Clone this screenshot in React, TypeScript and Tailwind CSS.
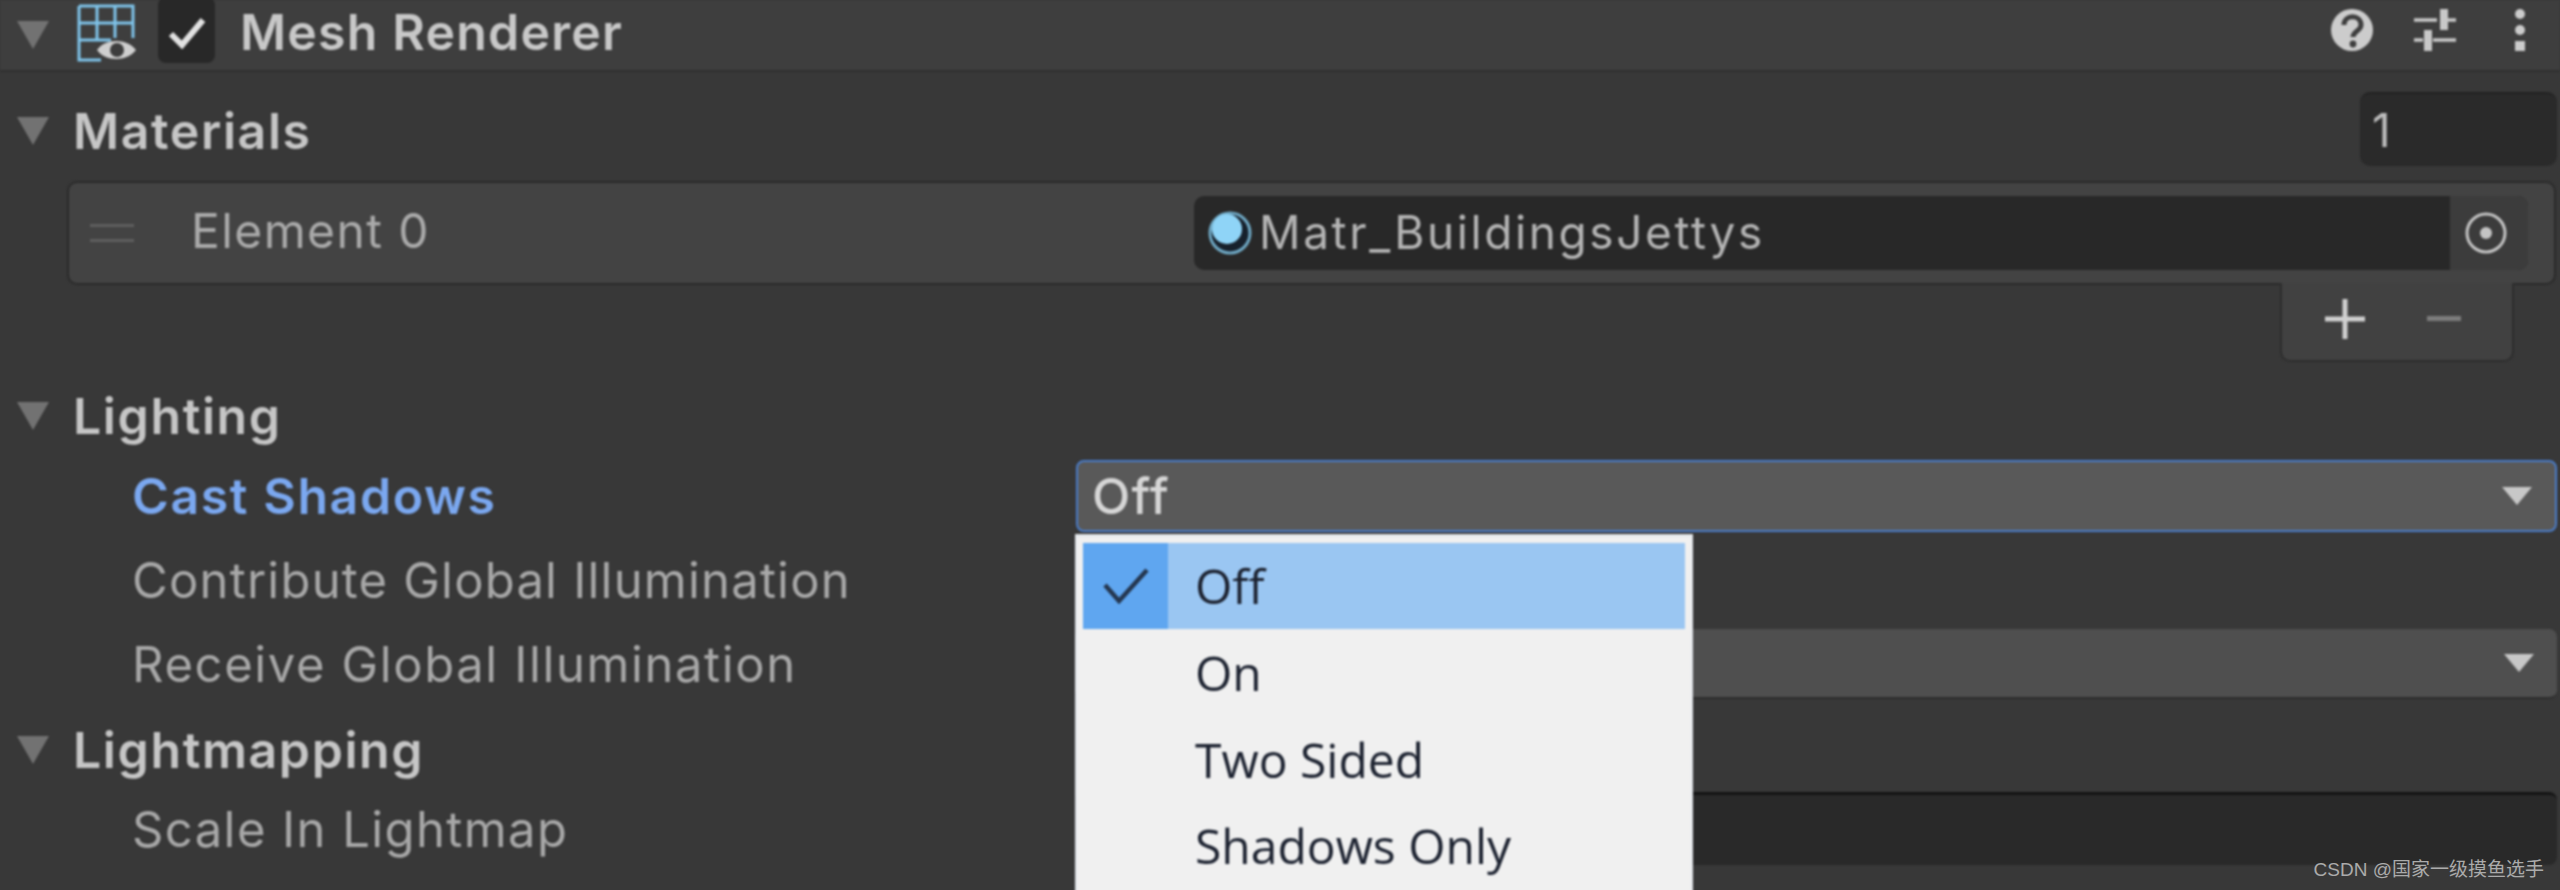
const Caret = () => (
  <svg viewBox="0 0 34 30" className="w-[34px] h-[30px] shrink-0">
    <path d="M1 1H33L17 29Z" fill="#727272" />
  </svg>
);

const MeshIcon = () => (
  <svg viewBox="0 0 60 62" className="w-[60px] h-[62px] shrink-0">
    <g fill="none" stroke="#7fc4ea" strokeWidth="3">
      <path d="M2 2H56V34M2 2V56H24M2 19H56M2 36H34M20 2V36M38 2V34" />
    </g>
    <path d="M20 46C28 34 50 34 59 46C50 58 28 58 20 46Z" fill="#cfcfcf" />
    <circle cx="40" cy="46" r="7" fill="#3d3d3d" />
  </svg>
);

const Target = () => (
  <svg viewBox="0 0 44 44" className="w-[44px] h-[44px]">
    <circle cx="22" cy="22" r="19" fill="none" stroke="#c4c4c4" strokeWidth="3" />
    <circle cx="22" cy="22" r="6" fill="#c4c4c4" />
  </svg>
);

const DownArrow = () => (
  <svg viewBox="0 0 32 20" className="w-[32px] h-[20px]">
    <path d="M1 1H31L16 19Z" fill="#c8c8c8" />
  </svg>
);

function HeaderActions() {
  return (
    <div className="ml-auto flex items-center pr-[34px] -mt-[10px]">
      <svg viewBox="0 0 44 44" className="w-[44px] h-[44px]">
        <circle cx="22" cy="22" r="21" fill="#cccccc" />
        <path d="M14 17C14 6 31 6 31 17C31 23 23 23 23 29" fill="none" stroke="#3e3e3e" strokeWidth="5" />
        <circle cx="23" cy="36" r="3.4" fill="#3e3e3e" />
      </svg>
      <svg viewBox="0 0 44 44" className="w-[44px] h-[44px] ml-[39px]">
        <path d="M1 12H24M34 12H43M1 32H10M20 32H43" stroke="#c8c8c8" strokeWidth="3.5" />
        <path d="M31 1V22M15 22V43" stroke="#c8c8c8" strokeWidth="8" />
      </svg>
      <svg viewBox="0 0 12 44" className="w-[12px] h-[44px] ml-[57px]">
        <circle cx="6" cy="6" r="5" fill="#cccccc" />
        <circle cx="6" cy="22" r="5" fill="#cccccc" />
        <rect x="1" y="33" width="10" height="10" fill="#cccccc" />
      </svg>
    </div>
  );
}

function SectionTitle({ title, className }: { title: string; className: string }) {
  return (
    <div className={`flex items-center ${className}`}>
      <div className="ml-[16px] w-[57px] flex">
        <Caret />
      </div>
      <span className="text-[50px] font-semibold text-[#c6c6c6] tracking-[1.6px]">{title}</span>
    </div>
  );
}

function PropRow({
  label,
  active,
  className,
  labelClass = "tracking-[1.2px]",
  children,
}: {
  label: string;
  active?: boolean;
  className: string;
  labelClass?: string;
  children?: React.ReactNode;
}) {
  return (
    <div className={`flex items-center ${className}`}>
      <div
        className={`ml-[132px] w-[944px] ${labelClass} ${
          active ? "text-[50px] text-[#7ba8f0] font-semibold" : "text-[49px] text-[#a8a8a8]"
        }`}
      >
        {label}
      </div>
      {children}
    </div>
  );
}

export default function App() {
  return (
    <div className="relative w-[2560px] h-[890px] overflow-hidden bg-[#383838] font-['Inter','Liberation_Sans',sans-serif] leading-none">
      <div className="blur-[1.2px]">
        {/* Component header */}
        <div className="flex items-center h-[72px] bg-[#3e3e3e] border-b-2 border-[#303030]">
          <div className="ml-[16px] w-[61px] flex">
            <Caret />
          </div>
          <MeshIcon />
          <div className="ml-[21px] w-[57px] h-[66px] -mt-[10px] rounded-[8px] bg-[#282828] flex items-center justify-center">
            <svg viewBox="0 0 38 32" className="w-[38px] h-[32px] mt-[6px]">
              <path d="M3 17L14 28L35 3" fill="none" stroke="#e2e2e2" strokeWidth="6" />
            </svg>
          </div>
          <span className="ml-[25px] mb-[6px] text-[50px] font-semibold text-[#c8c8c8] tracking-[1.2px]">
            Mesh Renderer
          </span>
          <HeaderActions />
        </div>

        {/* Materials */}
        <div className="flex items-center justify-between h-[109px] pt-[5px] pr-[3px]">
          <SectionTitle title="Materials" className="h-[74px] mt-[3px]" />
          <div className="w-[197px] h-[74px] rounded-[10px] bg-[#2a2a2a] border-t-2 border-[#222222] flex items-center pl-[12px] text-[46px] text-[#bdbdbd]">
            1
          </div>
        </div>

        <div className="ml-[67px] mr-[4px] h-[104px] rounded-[10px] bg-[#434343] border-2 border-[#2b2b2b] flex items-center pr-[26px]">
          <div className="ml-[21px] w-[101px] flex flex-col gap-[12px]">
            <div className="w-[44px] h-[3px] bg-[#5e5e5e]" />
            <div className="w-[44px] h-[3px] bg-[#5e5e5e]" />
          </div>
          <span className="w-[1003px] mb-[4px] text-[48px] text-[#aaaaaa] tracking-[1.4px]">Element 0</span>
          <div className="flex-1 h-[74px] rounded-[10px] bg-[#282828] flex items-center overflow-hidden">
            <svg viewBox="0 0 44 44" className="ml-[14px] w-[44px] h-[44px] shrink-0">
              <circle cx="22" cy="22" r="20" fill="#17212c" stroke="#6fa8c4" strokeWidth="3" />
              <circle cx="19" cy="18" r="15" fill="#8fd4f7" />
            </svg>
            <span className="ml-[7px] mb-[2px] text-[46px] text-[#b4b4b4] tracking-[2.6px]">Matr_BuildingsJettys</span>
            <div className="ml-auto w-[78px] h-full bg-[#3c3c3c] flex items-center justify-center pr-[6px]">
              <Target />
            </div>
          </div>
        </div>

        <div className="flex justify-end pr-[46px] h-[79px]">
          <div className="w-[234px] h-full -mt-[2px] pb-[6px] rounded-b-[10px] bg-[#414141] border-x-2 border-b-2 border-[#2e2e2e] flex items-center">
            <svg viewBox="0 0 42 42" className="ml-[42px] w-[42px] h-[42px]">
              <path d="M21 1V41M1 21H41" stroke="#d0d0d0" strokeWidth="5" />
            </svg>
            <div className="ml-[61px] w-[34px] h-[5px] bg-[#7c7c7c]" />
          </div>
        </div>

        {/* Lighting */}
        <SectionTitle title="Lighting" className="h-[88px] mt-[8px]" />
        <div className="flex flex-col">
          <PropRow label="Cast Shadows" labelClass="tracking-[1.6px]" active className="h-[72px]">
            <div className="w-[1481px] h-[72px] rounded-[8px] bg-[#595959] border-2 border-[#4a7cc8] flex items-center pl-[14px] text-[50px] font-medium text-[#d6d6d6] tracking-[1.2px]">
              Off
              <div className="ml-auto mr-[22px] flex">
                <DownArrow />
              </div>
            </div>
          </PropRow>
          <PropRow label="Contribute Global Illumination" className="h-[96px]" />
          <PropRow label="Receive Global Illumination" labelClass="tracking-[1.6px]" className="h-[70px] mt-[1px]">
            <div className="w-[1481px] h-[70px] rounded-[8px] bg-[#4f4f4f] border-b-2 border-[#2e2e2e] flex items-center justify-end pr-[22px]">
              <DownArrow />
            </div>
          </PropRow>
        </div>

        {/* Lightmapping */}
        <SectionTitle title="Lightmapping" className="h-[84px] mt-[9px]" />
        <PropRow label="Scale In Lightmap" labelClass="pt-[1px] tracking-[1.4px]" className="h-[73px]">
          <div className="w-[1481px] h-[73px] rounded-[8px] bg-[#292929] border-t-[3px] border-[#141414]" />
        </PropRow>
      </div>

      {/* Popup menu */}
      <div className="absolute left-[1075px] top-[534px] w-[618px] h-[370px] bg-[#f0f0f0] border-t-[3px] border-x-2 border-[#e4e8ec] p-[6px] font-['Open_Sans','Noto_Sans',sans-serif] text-[48px] text-[#1c2230] blur-[0.8px]">
        <div className="flex items-center h-[86px] bg-[#9ac6f2]">
          <div className="w-[85px] h-full bg-[#5fa6f0] flex items-center justify-center">
            <svg viewBox="0 0 46 36" className="w-[46px] h-[36px]">
              <path d="M2 17L16 33L44 2" fill="none" stroke="#24364f" strokeWidth="4.5" />
            </svg>
          </div>
          <span className="ml-[27px]">Off</span>
        </div>
        <div className="flex flex-col pl-[112px]">
          <div className="h-[88px] flex items-center">On</div>
          <div className="h-[86px] flex items-center">Two Sided</div>
          <div className="h-[86px] flex items-center">Shadows Only</div>
        </div>
      </div>

      <span className="absolute right-[16px] top-[860px] text-[19px] text-[#ababab] font-['Liberation_Sans','Noto_Sans_CJK_SC',sans-serif]">
        CSDN @国家一级摸鱼选手
      </span>
    </div>
  );
}
